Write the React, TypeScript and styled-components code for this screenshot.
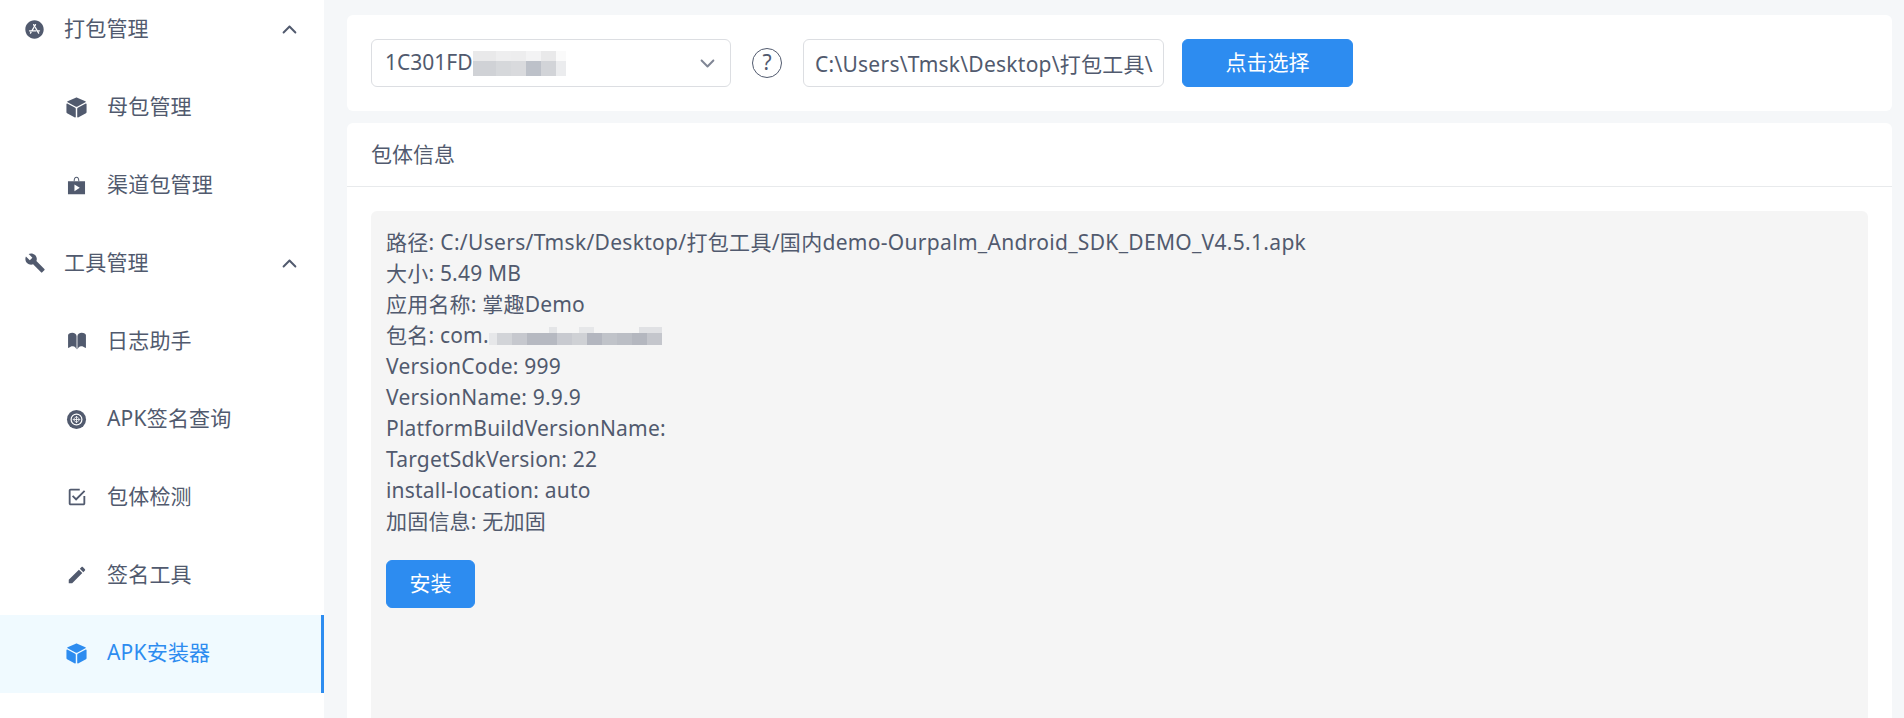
import React from 'react'
import styled, { createGlobalStyle } from 'styled-components'
import {
  IoIosArrowDown,
  IoIosArrowUp,
  IoIosBook,
  IoMdBuild,
  IoMdCheckboxOutline,
  IoMdCreate,
  IoMdCube,
} from 'react-icons/io'
import { IoLogoAppleAppstore } from 'react-icons/io5'

const textColor = '#515a6e'
const blue = '#2d8cf0'
const borderColor = '#dcdee2'

const GlobalStyle = createGlobalStyle`
  html, body {
    margin: 0;
    height: 100%;
    overflow: hidden;
  }

  body {
    font-family: "Noto Sans", "Noto Sans CJK SC", sans-serif;
    font-size: 21px;
    line-height: 31.5px;
    color: ${textColor};
    background: #f5f7f9;
  }
`

const Layout = styled.div`
  display: flex;
  height: 718px;
  overflow: hidden;
`

const Sidebar = styled.aside`
  flex: 0 0 324px;
  background: #fff;
  overflow: hidden;
`

const Menu = styled.ul`
  list-style: none;
  margin: -9px 0 0;
  padding: 0;
`

const MenuRow = styled.li<{ $sub?: boolean; $active?: boolean }>`
  display: flex;
  align-items: center;
  box-sizing: border-box;
  height: 78px;
  padding-left: ${(p) => (p.$sub ? '66px' : '24px')};
  padding-bottom: 2px;
  color: ${(p) => (p.$active ? blue : textColor)};
  background: ${(p) => (p.$active ? '#f0faff' : 'transparent')};
  border-right: 3px solid ${(p) => (p.$active ? blue : 'transparent')};
`

const MenuIcon = styled.span<{ $sub?: boolean; $size: number }>`
  display: flex;
  align-items: center;
  justify-content: center;
  flex: 0 0 21px;
  min-width: 0;
  margin-right: ${(p) => (p.$sub ? '20px' : '19px')};
  font-size: ${(p) => p.$size}px;

  svg {
    flex-shrink: 0;
  }
`

const MenuLabel = styled.span`
  flex: 1;
  letter-spacing: 0.2px;
`

const Chevron = styled(IoIosArrowUp)`
  margin-right: 21px;
  font-size: 21px;
`

const Main = styled.main`
  flex: 1;
  display: flex;
  flex-direction: column;
  gap: 12px;
  min-width: 0;
  padding: 15px 12px 0 23px;
`

const Toolbar = styled.section`
  display: flex;
  align-items: center;
  padding: 24px;
  background: #fff;
  border-radius: 6px;
`

const Select = styled.div`
  display: flex;
  align-items: center;
  box-sizing: border-box;
  width: 360px;
  height: 48px;
  padding: 0 12px 0 13px;
  border: 1px solid ${borderColor};
  border-radius: 6px;
`

const SelectArrow = styled(IoIosArrowDown)`
  margin-left: auto;
  font-size: 21px;
  color: #808695;
`

const Mosaic = styled.span`
  display: inline-flex;
  flex-direction: column;
`

const MosaicRow = styled.span`
  display: flex;
`

const MosaicCell = styled.span<{ $color: string; $width: number; $height: number }>`
  display: block;
  width: ${(p) => p.$width}px;
  height: ${(p) => p.$height}px;
  background: ${(p) => p.$color};
`

const Help = styled.span`
  display: flex;
  align-items: center;
  justify-content: center;
  flex: 0 0 auto;
  box-sizing: border-box;
  width: 30px;
  height: 30px;
  margin: 0 21px;
  border: 1px solid ${textColor};
  border-radius: 50%;
  font-size: 21px;
`

const PathInput = styled.input`
  box-sizing: border-box;
  width: 361px;
  height: 48px;
  padding: 0 10px 0 11px;
  border: 1px solid ${borderColor};
  border-radius: 6px;
  outline: none;
  font: inherit;
  letter-spacing: 0.25px;
  color: ${textColor};
  background: #fff;
`

const PrimaryButton = styled.button<{ $width: number }>`
  width: ${(p) => p.$width}px;
  height: 48px;
  padding: 0;
  border: 1px solid ${blue};
  border-radius: 6px;
  font: inherit;
  color: #fff;
  background: ${blue};
`

const ChooseButton = styled(PrimaryButton)`
  margin-left: 18px;
`

const Card = styled.section`
  flex: 1;
  display: flex;
  flex-direction: column;
  min-height: 0;
  background: #fff;
  border-radius: 6px 6px 0 0;
`

const CardHeader = styled.header`
  height: 63px;
  padding: 0 24px;
  line-height: 63px;
  border-bottom: 1px solid #e8eaec;
`

const CardBody = styled.div`
  flex: 1;
  min-height: 0;
  padding: 24px 24px 0;
`

const InfoPanel = styled.div`
  box-sizing: border-box;
  height: 100%;
  padding: 16px 15px 15px;
  background: #f5f5f5;
  border-radius: 6px 6px 0 0;
`

const InfoLine = styled.div<{ $wide?: boolean }>`
  display: flex;
  align-items: center;
  height: 31px;
  letter-spacing: ${(p) => (p.$wide ? '0.31px' : '0.2px')};
  white-space: pre;
`

const InstallButton = styled(PrimaryButton)`
  display: block;
  margin-top: 23px;
`

const BundleIcon = () => (
  <svg width="1em" height="1em" viewBox="0 0 512 512" fill="currentColor">
    <path d="M256 40c-40 0-68 30-70 112h24c2-62 20-88 46-88s44 26 46 88h24c-2-82-30-112-70-112z" />
    <path d="M48 150h416v320H48z M206 230v164l130-82z" fillRule="evenodd" />
  </svg>
)

const WheelIcon = () => (
  <svg width="1em" height="1em" viewBox="0 0 512 512">
    <circle cx="256" cy="256" r="232" fill="currentColor" />
    <circle cx="256" cy="256" r="132" fill="none" stroke="#fff" strokeWidth="30" />
    <path d="M256 176l80 80-80 80-80-80zM256 176v160M176 256h160" fill="none" stroke="#fff" strokeWidth="20" />
  </svg>
)

const selectMosaic = [
  { height: 10, cells: [['#e9e9ea', 23], ['#eeeeef', 15], ['#ededee', 15], ['#f3f3f4', 15], ['#e9e9ea', 15], ['#fafafa', 10]] },
  { height: 15, cells: [['#d0d2d6', 23], ['#d6d8db', 15], ['#d9dadd', 15], ['#bdc1c9', 15], ['#d2d4d8', 15], ['#ebecee', 10]] },
] as const

const packageMosaic = [
  { height: 6, cells: [['#f5f5f5', 60], ['#e4e5e7', 8], ['#f5f5f5', 22], ['#e6e7e9', 15], ['#f5f5f5', 45], ['#e0e1e4', 23]] },
  { height: 12, cells: [['#e6e7e9', 8], ['#d2d4d8', 15], ['#c6c8ce', 15], ['#b6b9c1', 30], ['#c8cad0', 15], ['#cfd1d5', 15], ['#b3b6bf', 15], ['#c0c3c9', 15], ['#bbbec5', 15], ['#b4b7bf', 15], ['#c4c6cc', 15]] },
] as const

const renderMosaic = (rows: typeof selectMosaic | typeof packageMosaic) => (
  <Mosaic>
    {rows.map((row, i) => (
      <MosaicRow key={i}>
        {row.cells.map(([color, width], j) => (
          <MosaicCell key={j} $color={color} $width={width} $height={row.height} />
        ))}
      </MosaicRow>
    ))}
  </Mosaic>
)

const menu = [
  { label: '打包管理', icon: <IoLogoAppleAppstore />, size: 21, open: true },
  { label: '母包管理', icon: <IoMdCube />, size: 23, sub: true },
  { label: '渠道包管理', icon: <BundleIcon />, size: 21, sub: true },
  { label: '工具管理', icon: <IoMdBuild />, size: 22, open: true },
  { label: '日志助手', icon: <IoIosBook />, size: 22, sub: true },
  { label: 'APK签名查询', icon: <WheelIcon />, size: 21, sub: true },
  { label: '包体检测', icon: <IoMdCheckboxOutline />, size: 22, sub: true },
  { label: '签名工具', icon: <IoMdCreate />, size: 22, sub: true },
  { label: 'APK安装器', icon: <IoMdCube />, size: 23, sub: true, active: true },
]

const App = () => (
  <Layout>
    <GlobalStyle />
    <Sidebar>
      <Menu>
        {menu.map((item) => (
          <MenuRow key={item.label} $sub={item.sub} $active={item.active}>
            <MenuIcon $sub={item.sub} $size={item.size}>{item.icon}</MenuIcon>
            <MenuLabel>{item.label}</MenuLabel>
            {item.open && <Chevron />}
          </MenuRow>
        ))}
      </Menu>
    </Sidebar>
    <Main>
      <Toolbar>
        <Select>
          1C301FD
          {renderMosaic(selectMosaic)}
          <SelectArrow />
        </Select>
        <Help>?</Help>
        <PathInput readOnly value="C:\Users\Tmsk\Desktop\打包工具\国内demo" />
        <ChooseButton $width={171}>点击选择</ChooseButton>
      </Toolbar>
      <Card>
        <CardHeader>包体信息</CardHeader>
        <CardBody>
          <InfoPanel>
            <InfoLine $wide>路径: C:/Users/Tmsk/Desktop/打包工具/国内demo-Ourpalm_Android_SDK_DEMO_V4.5.1.apk</InfoLine>
            <InfoLine>大小: 5.49 MB</InfoLine>
            <InfoLine>应用名称: 掌趣Demo</InfoLine>
            <InfoLine>
              包名: com.
              {renderMosaic(packageMosaic)}
            </InfoLine>
            <InfoLine>VersionCode: 999</InfoLine>
            <InfoLine>VersionName: 9.9.9</InfoLine>
            <InfoLine>PlatformBuildVersionName:</InfoLine>
            <InfoLine>TargetSdkVersion: 22</InfoLine>
            <InfoLine>install-location: auto</InfoLine>
            <InfoLine>加固信息: 无加固</InfoLine>
            <InstallButton $width={89}>安装</InstallButton>
          </InfoPanel>
        </CardBody>
      </Card>
    </Main>
  </Layout>
)

export default App
